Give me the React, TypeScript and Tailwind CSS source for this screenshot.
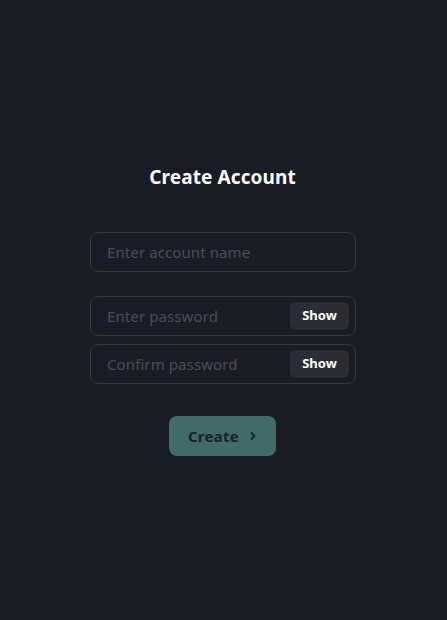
import React from "react";

export default function App() {
  return (
    <div className="w-[447px] h-[620px] bg-[#1a1c25] flex flex-col items-center pt-[163px]" style={{ fontFamily: '"Noto Sans", "Open Sans", sans-serif' }}>
      <h1 className="text-[19px] leading-[28px] font-bold text-white tracking-[0.1px] -ml-[2px]">Create Account</h1>
      <div className="mt-[41px] w-[266px] -ml-[1px] flex flex-col">
        <div className="h-[40px] rounded-[8px] border border-[#363844] flex items-center px-[16px]">
          <span className="text-[15px] text-[#4b4e5c] tracking-[0.1px]">Enter account name</span>
        </div>
        <div className="mt-[24px] h-[40px] rounded-[8px] border border-[#363844] flex items-center pl-[16px] pr-[6px]">
          <span className="text-[15px] text-[#4b4e5c] tracking-[0.1px] flex-1">Enter password</span>
          <button className="h-[28px] w-[59px] rounded-[6px] bg-[#2a2c36] text-white text-[13px] font-bold">Show</button>
        </div>
        <div className="mt-[8px] h-[40px] rounded-[8px] border border-[#363844] flex items-center pl-[16px] pr-[6px]">
          <span className="text-[15px] text-[#4b4e5c] tracking-[0.1px] flex-1">Confirm password</span>
          <button className="h-[28px] w-[59px] rounded-[6px] bg-[#2a2c36] text-white text-[13px] font-bold">Show</button>
        </div>
      </div>
      <button className="mt-[32px] h-[40px] w-[107px] rounded-[8px] bg-[#3f6b69] flex items-center justify-center gap-[10px] text-[#1c2129] -ml-[2px]">
        <span className="text-[15px] font-bold tracking-[0.3px]">Create</span>
        <svg width="8" height="10" viewBox="0 0 8 10" fill="none" stroke="currentColor" strokeWidth="1.8" strokeLinecap="round" strokeLinejoin="round">
          <path d="M2.5 2 L5.5 5 L2.5 8" />
        </svg>
      </button>
    </div>
  );
}
